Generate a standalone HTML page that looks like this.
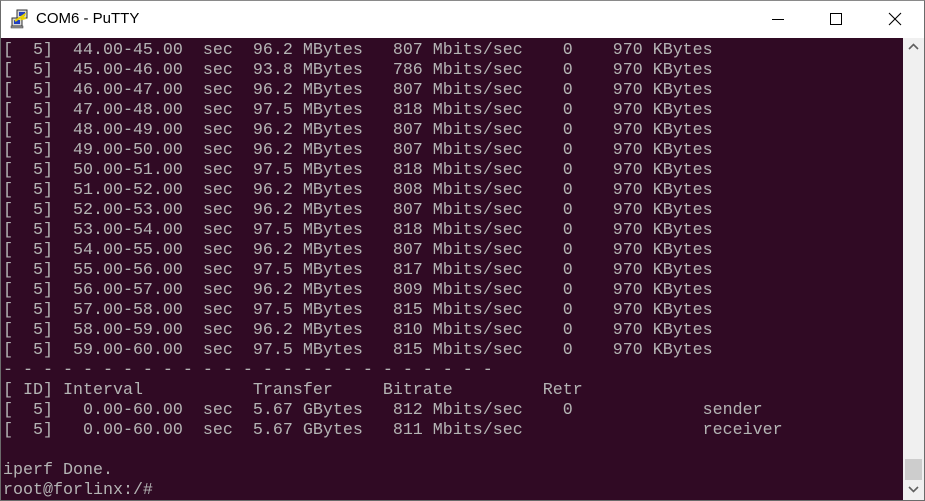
<!DOCTYPE html>
<html><head><meta charset="utf-8"><style>
html,body{margin:0;padding:0;width:925px;height:501px;overflow:hidden;background:#fff;}
.win{position:absolute;left:0;top:0;width:923px;height:499px;border:1px solid #6b6b6b;border-top:1px solid #8a8a8a;background:#fff;}
.title{position:absolute;left:0;top:0;width:923px;height:37px;background:#fff;}
.ttext{position:absolute;left:35px;top:9px;font-family:"Liberation Sans",sans-serif;font-size:15px;color:#000;}
.term{position:absolute;left:0;top:37px;width:902px;height:462px;background:#300a24;}
pre{margin:0;position:absolute;left:2px;top:3px;font-family:"Liberation Mono",monospace;font-size:16.67px;line-height:20px;color:#b4b4b4;}
.sb{position:absolute;left:902px;top:37px;width:21px;height:462px;background:#f0f0f0;}
.thumb{position:absolute;left:2px;top:421px;width:17px;height:21px;background:#cdcdcd;}
</style></head><body>
<div class="win">
<div class="title">
<svg style="position:absolute;left:9px;top:8px" width="20" height="20" viewBox="0 0 20 20">
<rect x="7" y="1" width="10" height="8" fill="#d8d8d8" stroke="#333" stroke-width="1"/>
<rect x="9" y="3" width="6" height="4" fill="#2040c0"/>
<rect x="2" y="9" width="10" height="8" fill="#d8d8d8" stroke="#333" stroke-width="1"/>
<rect x="4" y="11" width="6" height="4" fill="#2040c0"/>
<rect x="1" y="17" width="12" height="2" fill="#999" stroke="#333" stroke-width="0.5"/>
<path d="M5 12 L14 6 L12 10 L16 9" stroke="#e8d000" stroke-width="2" fill="none"/>
</svg>
<div class="ttext">COM6 - PuTTY</div>
<div style="position:absolute;left:771px;top:18px;width:12px;height:1px;background:#000"></div>
<div style="position:absolute;left:829px;top:12px;width:10px;height:10px;border:1px solid #000"></div>
<svg style="position:absolute;left:887px;top:11px" width="14" height="14" viewBox="0 0 14 14"><path d="M1 1L13 13M13 1L1 13" stroke="#000" stroke-width="1.1"/></svg>
</div>
<div class="term"><pre>[  5]  44.00-45.00  sec  96.2 MBytes   807 Mbits/sec    0    970 KBytes
[  5]  45.00-46.00  sec  93.8 MBytes   786 Mbits/sec    0    970 KBytes
[  5]  46.00-47.00  sec  96.2 MBytes   807 Mbits/sec    0    970 KBytes
[  5]  47.00-48.00  sec  97.5 MBytes   818 Mbits/sec    0    970 KBytes
[  5]  48.00-49.00  sec  96.2 MBytes   807 Mbits/sec    0    970 KBytes
[  5]  49.00-50.00  sec  96.2 MBytes   807 Mbits/sec    0    970 KBytes
[  5]  50.00-51.00  sec  97.5 MBytes   818 Mbits/sec    0    970 KBytes
[  5]  51.00-52.00  sec  96.2 MBytes   808 Mbits/sec    0    970 KBytes
[  5]  52.00-53.00  sec  96.2 MBytes   807 Mbits/sec    0    970 KBytes
[  5]  53.00-54.00  sec  97.5 MBytes   818 Mbits/sec    0    970 KBytes
[  5]  54.00-55.00  sec  96.2 MBytes   807 Mbits/sec    0    970 KBytes
[  5]  55.00-56.00  sec  97.5 MBytes   817 Mbits/sec    0    970 KBytes
[  5]  56.00-57.00  sec  96.2 MBytes   809 Mbits/sec    0    970 KBytes
[  5]  57.00-58.00  sec  97.5 MBytes   815 Mbits/sec    0    970 KBytes
[  5]  58.00-59.00  sec  96.2 MBytes   810 Mbits/sec    0    970 KBytes
[  5]  59.00-60.00  sec  97.5 MBytes   815 Mbits/sec    0    970 KBytes
- - - - - - - - - - - - - - - - - - - - - - - - -
[ ID] Interval           Transfer     Bitrate         Retr
[  5]   0.00-60.00  sec  5.67 GBytes   812 Mbits/sec    0             sender
[  5]   0.00-60.00  sec  5.67 GBytes   811 Mbits/sec                  receiver

iperf Done.
root@forlinx:/#</pre></div>
<div class="sb">
<svg style="position:absolute;left:5px;top:5px" width="11" height="8" viewBox="0 0 11 8"><path d="M1 6L5.5 1.5L10 6" stroke="#606060" stroke-width="1.6" fill="none"/></svg>
<div class="thumb"></div>
<svg style="position:absolute;left:5px;top:447px" width="11" height="8" viewBox="0 0 11 8"><path d="M1 2L5.5 6.5L10 2" stroke="#606060" stroke-width="1.6" fill="none"/></svg>
</div>
</div>
</body></html>
